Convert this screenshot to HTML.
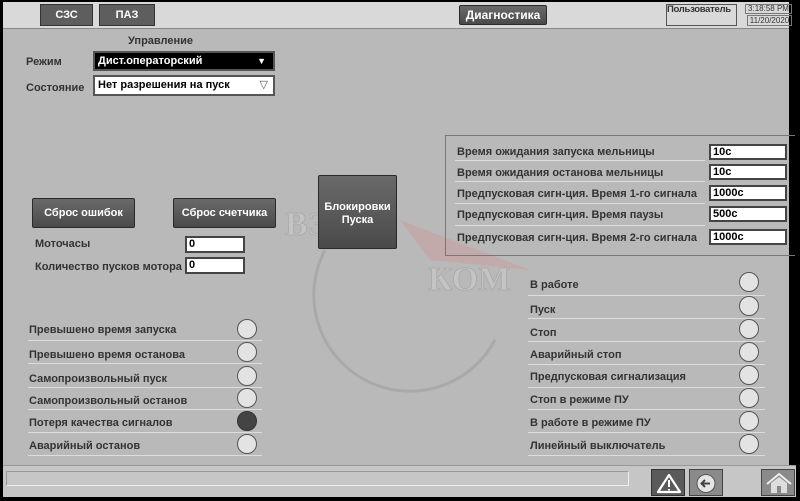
<!DOCTYPE html>
<html><head><meta charset="utf-8"><style>
*{margin:0;padding:0;box-sizing:border-box}
body{width:800px;height:501px;background:#000;position:relative;overflow:hidden;font-family:"Liberation Sans","DejaVu Sans",sans-serif;font-weight:bold;color:#333;font-size:11px}
.a{position:absolute}
.top{left:3px;top:2px;width:786px;height:27px;background:#d9d9d9;border-bottom:1px solid #888}
.main{left:3px;top:29px;width:786px;height:436px;background:#b9b9b9}
.bot{left:3px;top:465px;width:793px;height:32px;background:#c6c6c6;border-top:1px solid #999}
.tab{background:#5e5e5e;color:#fff;border:1px solid #333;text-align:center;font-size:11px;line-height:20px}
.btn{background:linear-gradient(#6a6a6a,#4a4a4a);color:#fff;border:1px solid #2a2a2a;text-align:center;font-size:11px;border-radius:2px}
.inp{background:#fff;border:2px solid #444;font-size:11px;color:#000;padding-left:2px;line-height:12px}
.lbl{font-size:11px;color:#333;white-space:nowrap}
.ln{height:1px;background:#666;border-bottom:1px solid #ddd}
.c{width:20px;height:20px;border-radius:50%;background:#e3e3e3;border:1px solid #555}
</style></head><body>
<div class="a top"></div>
<div class="a main"></div>
<div class="a bot"></div>
<!-- watermark -->
<svg class="a" style="left:280px;top:190px" width="260" height="270">
<path d="M120 30 L250 80 L150 70 Z" fill="#c9a0a0" opacity=".6"/>
<path d="M45 60 A88 88 0 0 0 215 150" fill="none" stroke="#a9a9a9" stroke-width="3"/>
<text x="5" y="45" font-size="34" fill="#c4c4c4" font-family="Liberation Serif" stroke="#a8a8a8" stroke-width=".8">ВЭЛ</text>
<text x="148" y="100" font-size="34" fill="#c4c4c4" font-family="Liberation Serif" stroke="#a8a8a8" stroke-width=".8">КОМ</text>
</svg>
<div class="a tab" style="left:40px;top:4px;width:53px;height:22px">СЗС</div>
<div class="a tab" style="left:99px;top:4px;width:56px;height:22px">ПАЗ</div>
<div class="a btn" style="left:459px;top:5px;width:88px;height:20px;line-height:19px;font-size:12px">Диагностика</div>
<div class="a" style="left:666px;top:4px;width:71px;height:22px;border:1px solid #555;font-size:9.5px;line-height:10px;letter-spacing:-.3px;overflow:hidden;white-space:nowrap">Пользователь</div>
<div class="a" style="left:745px;top:4px;width:47px;height:10px;border:1px solid #777;font-size:8px;font-weight:normal;line-height:8px;text-align:center;white-space:nowrap">3:18:58 PM</div>
<div class="a" style="left:747px;top:15px;width:45px;height:11px;border:1px solid #777;font-size:8px;font-weight:normal;line-height:9px;text-align:center;white-space:nowrap">11/20/2020</div>

<div class="a lbl" style="left:128px;top:35px">Управление</div>
<div class="a lbl" style="left:26px;top:56px">Режим</div>
<div class="a lbl" style="left:26px;top:82px">Состояние</div>
<div class="a" style="left:93px;top:51px;width:182px;height:20px;background:#000;border:2px solid #555;color:#fff;font-size:11px;line-height:16px;padding-left:3px">Дист.операторский<span style="position:absolute;right:7px;top:0;font-size:9px">▼</span></div>
<div class="a" style="left:93px;top:75px;width:182px;height:21px;background:#fff;border:2px solid #555;color:#000;font-size:11px;line-height:17px;padding-left:3px">Нет разрешения на пуск<span style="position:absolute;right:5px;top:0;font-size:11px;color:#555;font-weight:normal">▽</span></div>

<div class="a btn" style="left:32px;top:198px;width:103px;height:30px;line-height:28px">Сброс ошибок</div>
<div class="a btn" style="left:173px;top:198px;width:103px;height:30px;line-height:28px">Сброс счетчика</div>
<div class="a btn" style="left:318px;top:175px;width:79px;height:74px;padding-top:25px;line-height:13px">Блокировки<br>Пуска</div>
<div class="a lbl" style="left:35px;top:238px">Моточасы</div>
<div class="a lbl" style="left:35px;top:261px">Количество пусков мотора</div>
<div class="a inp" style="left:185px;top:236px;width:60px;height:17px">0</div>
<div class="a inp" style="left:185px;top:257px;width:60px;height:17px">0</div>

<div class="a" style="left:445px;top:135px;width:350px;height:121px;border:1px solid #777;border-right:none"></div>
<div class="a lbl" style="left:457px;top:146px">Время ожидания запуска мельницы</div>
<div class="a lbl" style="left:457px;top:167px">Время ожидания останова мельницы</div>
<div class="a lbl" style="left:457px;top:188px">Предпусковая сигн-ция. Время 1-го сигнала</div>
<div class="a lbl" style="left:457px;top:209px">Предпусковая сигн-ция. Время паузы</div>
<div class="a lbl" style="left:457px;top:232px">Предпусковая сигн-ция. Время 2-го сигнала</div>
<div class="a ln" style="left:455px;top:160px;width:250px"></div>
<div class="a ln" style="left:455px;top:181px;width:250px"></div>
<div class="a ln" style="left:455px;top:203px;width:250px"></div>
<div class="a ln" style="left:455px;top:225px;width:250px"></div>
<div class="a inp" style="left:709px;top:144px;width:78px;height:16px">10с</div>
<div class="a inp" style="left:709px;top:164px;width:78px;height:16px">10с</div>
<div class="a inp" style="left:709px;top:185px;width:78px;height:16px">1000с</div>
<div class="a inp" style="left:709px;top:206px;width:78px;height:16px">500с</div>
<div class="a inp" style="left:709px;top:229px;width:78px;height:16px">1000с</div>

<!-- left indicators -->
<div class="a lbl" style="left:29px;top:324px">Превышено время запуска</div>
<div class="a lbl" style="left:29px;top:349px">Превышено время останова</div>
<div class="a lbl" style="left:29px;top:373px">Самопроизвольный пуск</div>
<div class="a lbl" style="left:29px;top:395px">Самопроизвольный останов</div>
<div class="a lbl" style="left:29px;top:417px">Потеря качества сигналов</div>
<div class="a lbl" style="left:29px;top:440px">Аварийный останов</div>
<div class="a ln" style="left:28px;top:340px;width:234px"></div>
<div class="a ln" style="left:28px;top:363px;width:234px"></div>
<div class="a ln" style="left:28px;top:387px;width:234px"></div>
<div class="a ln" style="left:28px;top:409px;width:234px"></div>
<div class="a ln" style="left:28px;top:432px;width:234px"></div>
<div class="a ln" style="left:28px;top:455px;width:234px"></div>
<div class="a c" style="left:237px;top:319px"></div>
<div class="a c" style="left:237px;top:342px"></div>
<div class="a c" style="left:237px;top:366px"></div>
<div class="a c" style="left:237px;top:388px"></div>
<div class="a c" style="left:237px;top:411px;background:#444;border-color:#333"></div>
<div class="a c" style="left:237px;top:434px"></div>

<!-- right indicators -->
<div class="a lbl" style="left:530px;top:279px">В работе</div>
<div class="a lbl" style="left:530px;top:304px">Пуск</div>
<div class="a lbl" style="left:530px;top:327px">Стоп</div>
<div class="a lbl" style="left:530px;top:349px">Аварийный стоп</div>
<div class="a lbl" style="left:530px;top:371px">Предпусковая сигнализация</div>
<div class="a lbl" style="left:530px;top:394px">Стоп в режиме ПУ</div>
<div class="a lbl" style="left:530px;top:417px">В работе в режиме ПУ</div>
<div class="a lbl" style="left:530px;top:440px">Линейный выключатель</div>
<div class="a ln" style="left:528px;top:295px;width:237px"></div>
<div class="a ln" style="left:528px;top:318px;width:237px"></div>
<div class="a ln" style="left:528px;top:341px;width:237px"></div>
<div class="a ln" style="left:528px;top:364px;width:237px"></div>
<div class="a ln" style="left:528px;top:387px;width:237px"></div>
<div class="a ln" style="left:528px;top:409px;width:237px"></div>
<div class="a ln" style="left:528px;top:432px;width:237px"></div>
<div class="a ln" style="left:528px;top:455px;width:237px"></div>
<div class="a c" style="left:739px;top:272px"></div>
<div class="a c" style="left:739px;top:296px"></div>
<div class="a c" style="left:739px;top:319px"></div>
<div class="a c" style="left:739px;top:342px"></div>
<div class="a c" style="left:739px;top:365px"></div>
<div class="a c" style="left:739px;top:388px"></div>
<div class="a c" style="left:739px;top:411px"></div>
<div class="a c" style="left:739px;top:434px"></div>

<!-- bottom -->
<div class="a" style="left:6px;top:471px;width:623px;height:15px;border:1px solid #eee;border-top-color:#999;border-left-color:#999"></div>
<div class="a" style="left:651px;top:469px;width:34px;height:27px;background:#5a5a5a;border:1px solid #333"><svg width="34" height="27"><path d="M17 5 L28 22 L6 22 Z" fill="none" stroke="#fff" stroke-width="2.2" stroke-linejoin="round"/><path d="M17 10 V17 M17 19 V20.5" stroke="#fff" stroke-width="2"/></svg></div>
<div class="a" style="left:689px;top:469px;width:34px;height:27px;background:#8a8a8a;border:1px solid #444"><svg width="34" height="27"><circle cx="16" cy="13.5" r="9" fill="#e5e5e5" stroke="#555"/><path d="M20 13.5 H12 M15 10 L11.5 13.5 L15 17" fill="none" stroke="#444" stroke-width="2"/></svg></div>
<div class="a" style="left:761px;top:469px;width:34px;height:27px;background:#8a8a8a;border:1px solid #444"><svg width="34" height="27"><path d="M5 14 L17 4 L29 14" fill="none" stroke="#eee" stroke-width="2"/><path d="M9 13 V23 H25 V13 L17 7 Z" fill="#ddd"/><rect x="15" y="16" width="4" height="7" fill="#888"/></svg></div>
</body></html>
